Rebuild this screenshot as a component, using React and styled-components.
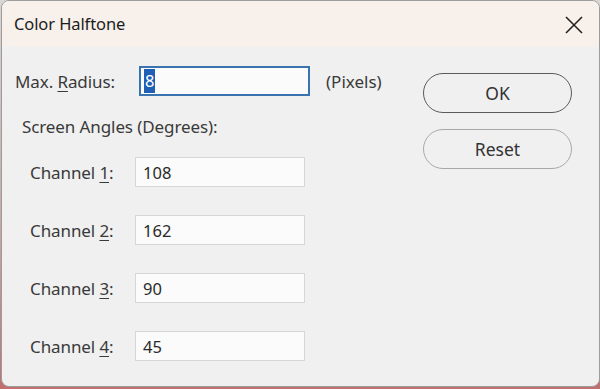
import React from "react"
import styled, { createGlobalStyle } from "styled-components"

const Global = createGlobalStyle`
    html, body {
        margin: 0;
        padding: 0;
        width: 600px;
        height: 389px;
        overflow: hidden;
        background: linear-gradient(180deg, #d9d6d4 0%, #c9a5a3 60%, #c0706e 100%);
        font-family: "Noto Sans", "Open Sans", sans-serif;
    }
`

const Window = styled.div`
    box-sizing: border-box;
    width: 599px;
    height: 387px;
    margin-left: 1px;
    border: 1px solid #9c9c9c;
    border-radius: 8px;
    overflow: hidden;
    background: #f0f0f0;
    display: flex;
    flex-direction: column;
    color: #333;
`
const TitleBar = styled.div`
    height: 46px;
    flex: none;
    background: #f8f0ea;
    display: flex;
    align-items: center;
    justify-content: space-between;
    padding: 0 15px 0 12px;
`
const Title = styled.div`
    font-size: 16.5px;
    color: #1c1c1c;
    letter-spacing: -0.1px;
    padding-bottom: 1px;
`
const Close = styled.div`
    width: 20px;
    height: 20px;
    display: flex;
    align-items: center;
    justify-content: center;
    margin-top: 2px;
`
const Body = styled.div`
    flex: 1;
    display: flex;
    padding: 19px 27px 0 12px;
    justify-content: space-between;
`
const Left = styled.div`
    display: flex;
    flex-direction: column;
`
const Row = styled.div`
    display: flex;
    align-items: center;
    height: 30px;
    margin-left: ${(p) => p.$indent || 0}px;
    margin-top: ${(p) => p.$top || 0}px;
`
const Label = styled.div`
    font-size: 17px;
    color: #3a3a3a;
    width: ${(p) => (p.$width ? p.$width + "px" : "auto")};
    flex: none;
    letter-spacing: -0.1px;
`
const Key = styled.span`
    text-decoration: underline;
    text-underline-offset: 3px;
    text-decoration-thickness: 1px;
`
const Field = styled.div`
    box-sizing: border-box;
    width: ${(p) => p.$width}px;
    height: 30px;
    background: #fbfbfb;
    border: ${(p) => (p.$focus ? "2px solid #3a74b0" : "1px solid #d6d6d6")};
    display: flex;
    align-items: center;
    padding-left: ${(p) => (p.$focus ? 3 : 7)}px;
    font-size: 16.5px;
    color: #2a2a2a;
`
const Selected = styled.span`
    background: #1f5fb5;
    color: #fff;
    padding: 2px 1px;
    line-height: 20px;
`
const Unit = styled.div`
    margin-left: 16px;
    font-size: 17px;
    color: #3a3a3a;
`
const Section = styled.div`
    font-size: 17px;
    color: #3a3a3a;
    margin: 20px 0 0 8px;
    height: 22px;
    line-height: 22px;
    letter-spacing: -0.1px;
`
const Right = styled.div`
    display: flex;
    flex-direction: column;
    gap: 16px;
    padding-top: 7px;
`
const Button = styled.div`
    box-sizing: border-box;
    width: 149px;
    height: 40px;
    border-radius: 20px;
    border: ${(p) => (p.$primary ? "1.5px solid #5a5a5a" : "1px solid #a8a8a8")};
    display: flex;
    align-items: center;
    justify-content: center;
    font-size: 17.5px;
    color: #333;
    background: #f0f0f0;
`

const channels = [
    ["1", "108"],
    ["2", "162"],
    ["3", "90"],
    ["4", "45"],
]

export default function App() {
    return (
        <>
            <Global />
            <Window>
                <TitleBar>
                    <Title>Color Halftone</Title>
                    <Close>
                        <svg width="18" height="18" viewBox="0 0 18 18">
                            <path d="M1 1 L17 17 M17 1 L1 17" stroke="#222" strokeWidth="1.6" />
                        </svg>
                    </Close>
                </TitleBar>
                <Body>
                    <Left>
                        <Row $indent={1}>
                            <Label $width={124}>
                                Max. <Key>R</Key>adius:
                            </Label>
                            <Field $width={171} $focus>
                                <Selected>8</Selected>
                            </Field>
                            <Unit>(Pixels)</Unit>
                        </Row>
                        <Section>Screen Angles (Degrees):</Section>
                        {channels.map(([n, v], i) => (
                            <Row key={n} $indent={16} $top={i === 0 ? 19 : 28}>
                                <Label $width={105}>
                                    Channel <Key>{n}</Key>:
                                </Label>
                                <Field $width={170}>{v}</Field>
                            </Row>
                        ))}
                    </Left>
                    <Right>
                        <Button $primary>OK</Button>
                        <Button>Reset</Button>
                    </Right>
                </Body>
            </Window>
        </>
    )
}
